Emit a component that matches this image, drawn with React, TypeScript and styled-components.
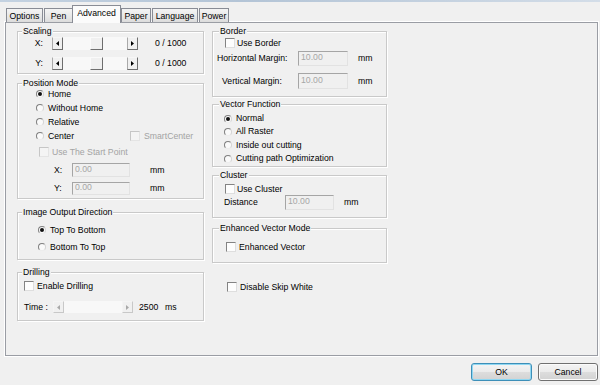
import React from "react";
import styled, { createGlobalStyle, css } from "styled-components";

const Global = createGlobalStyle`
  html, body { margin: 0; padding: 0; background: #f0f0f0; }
  body { font-family: "Liberation Sans", Arial, sans-serif; font-size: 8.7px; color: #000; }
  * { box-sizing: border-box; }
`;

const Window = styled.div`
  width: 600px;
  height: 385px;
  background: #f0f0f0;
  display: flex;
  flex-direction: column;
  overflow: hidden;
`;

const TopStrip = styled.div`
  height: 2px;
  background: linear-gradient(90deg, #c4d2e1, #b3c4d6 40%, #d3dde8);
`;

const TabStrip = styled.div`
  height: 20px;
  display: flex;
  align-items: flex-end;
  padding-left: 6px;
  position: relative;
  z-index: 2;
`;

const Tab = styled.div<{ $w: number; $active?: boolean }>`
  width: ${(p) => p.$w}px;
  height: 14px;
  margin-right: 1px;
  border: 1px solid #898c95;
  border-bottom: none;
  background: linear-gradient(#f4f4f4, #e9e9e9 50%, #dcdcdc);
  display: flex;
  align-items: center;
  justify-content: center;
  padding-top: 1px;
  line-height: 11px;
  white-space: nowrap;
  ${(p) =>
    p.$active &&
    css`
      height: 18px;
      margin: 0 0 -1px -2px;
      background: #fbfbfb;
      padding: 0 0 3px 0;
    `}
`;

const Panel = styled.div`
  margin-left: 5px;
  width: 593px;
  height: 334px;
  border: 1px solid #9a9da4;
  box-shadow: 0 0 0 1px #ffffff;
  background: #f0f0f0;
  display: flex;
  gap: 8px;
  padding: 8px 0 0 11px;
  position: relative;
  z-index: 1;
`;

const Column = styled.div<{ $w: number }>`
  width: ${(p) => p.$w}px;
  display: flex;
  flex-direction: column;
`;

const Group = styled.div<{ $h: number; $mt?: number }>`
  position: relative;
  height: ${(p) => p.$h}px;
  margin-top: ${(p) => p.$mt ?? 0}px;
  border: 1px solid #c9c9c9;
  box-shadow: inset 1px 1px 0 #ffffff, 1px 1px 0 #ffffff;
  display: flex;
  flex-direction: column;
`;

const Legend = styled.span<{ $x: number }>`
  position: absolute;
  top: -6px;
  left: ${(p) => p.$x}px;
  padding: 0 1px;
  background: #f0f0f0;
  line-height: 11px;
  white-space: nowrap;
`;

const Row = styled.div<{ $h?: number; $mt?: number; $pl?: number }>`
  display: flex;
  align-items: center;
  height: ${(p) => p.$h ?? 14}px;
  margin-top: ${(p) => p.$mt ?? 0}px;
  padding-left: ${(p) => p.$pl ?? 0}px;
  white-space: nowrap;
  line-height: 11px;
`;

const Cell = styled.span<{ $w?: number; $ml?: number; $right?: boolean; $dis?: boolean }>`
  display: inline-block;
  ${(p) => p.$w !== undefined && css`width: ${p.$w}px;`}
  margin-left: ${(p) => p.$ml ?? 0}px;
  text-align: ${(p) => (p.$right ? "right" : "left")};
  color: ${(p) => (p.$dis ? "#a3a3a3" : "#000")};
  flex-shrink: 0;
`;

const Radio = styled.span<{ $on?: boolean }>`
  position: relative;
  width: 8px;
  height: 8px;
  border-radius: 50%;
  border: 1px solid;
  border-color: #7f7f7f #d4d4d4 #ececec #7f7f7f;
  background: #fafafa;
  flex-shrink: 0;
  ${(p) =>
    p.$on &&
    css`
      &::after {
        content: "";
        position: absolute;
        left: 1px;
        top: 1px;
        width: 4px;
        height: 4px;
        border-radius: 50%;
        background: #111;
      }
    `}
`;

const Check = styled.span<{ $dis?: boolean }>`
  width: 10px;
  height: 10px;
  border: 1px solid;
  border-color: ${(p) => (p.$dis ? "#c6c6c6 #e4e4e4 #e4e4e4 #c6c6c6" : "#838383 #dedede #dedede #838383")};
  background: ${(p) => (p.$dis ? "#f4f4f4" : "#fdfdfd")};
  flex-shrink: 0;
`;

const Field = styled.input<{ $w: number; $h: number }>`
  width: ${(p) => p.$w}px;
  height: ${(p) => p.$h}px;
  margin: 0;
  padding: 0 2px 3px;
  border: 1px solid;
  border-color: #a5a5a5 #e2e2e2 #e2e2e2 #a5a5a5;
  background: #f0f0f0;
  font: inherit;
  font-size: 8.7px;
  line-height: 11px;
  color: #a6a6a6;
  -webkit-text-fill-color: #a6a6a6;
  opacity: 1;
  flex-shrink: 0;
`;

const Slider = styled.div<{ $w: number; $h: number }>`
  width: ${(p) => p.$w}px;
  height: ${(p) => p.$h}px;
  display: flex;
  background: #f8f8f8;
  flex-shrink: 0;
`;

const SlideBtn = styled.div<{ $dis?: boolean }>`
  width: 11px;
  height: 100%;
  background: #f0f0f0;
  border: 1px solid;
  border-color: ${(p) => (p.$dis ? "#f4f4f4 #c8c8c8 #c8c8c8 #f4f4f4" : "#f6f6f6 #6e6e6e #6e6e6e #a9a9a9")};
  display: flex;
  align-items: center;
  justify-content: center;
  flex-shrink: 0;
`;

const Thumb = styled.div<{ $at: number }>`
  margin-left: ${(p) => p.$at}px;
  width: 13px;
  height: 100%;
  background: #f0f0f0;
  border: 1px solid;
  border-color: #fafafa #6e6e6e #6e6e6e #fafafa;
  flex-shrink: 0;
`;

const Track = styled.div`
  flex: 1;
`;

const Buttons = styled.div`
  display: flex;
  justify-content: flex-end;
  gap: 6px;
  margin-top: 7px;
  padding-right: 2px;
`;

const Button = styled.button<{ $w: number; $def?: boolean }>`
  width: ${(p) => p.$w}px;
  height: 18px;
  padding: 0;
  border: 1px solid #707070;
  border-radius: 3px;
  background: linear-gradient(#f4f4f4, #ebebeb 48%, #dddddd 52%, #d2d2d2);
  box-shadow: inset 0 0 0 1px #fbfbfb;
  font-family: "Liberation Sans", Arial, sans-serif;
  font-size: 8.7px;
  color: #000;
  ${(p) =>
    p.$def &&
    css`
      border-color: #3d8fb8;
      box-shadow: inset 0 0 0 1px #8fd7f2;
    `}
`;

const Arrow = ({ dir, dis }: { dir: "l" | "r"; dis?: boolean }) => (
  <svg width="3" height="5" viewBox="0 0 3 5">
    <path d={dir === "l" ? "M3 0 L0 2.5 L3 5Z" : "M0 0 L3 2.5 L0 5Z"} fill={dis ? "#a8a8a8" : "#000"} />
  </svg>
);

const RadioRow = ({ label, on, pl, mt, gap = 4, h }: { label: string; on?: boolean; pl: number; mt?: number; gap?: number; h?: number }) => (
  <Row $pl={pl} $mt={mt} $h={h}>
    <Radio $on={on} />
    <Cell $ml={gap}>{label}</Cell>
  </Row>
);

const CheckRow = ({ label, pl, mt, gap = 3, h, dis }: { label: string; pl: number; mt?: number; gap?: number; h?: number; dis?: boolean }) => (
  <Row $pl={pl} $mt={mt} $h={h}>
    <Check $dis={dis} />
    <Cell $ml={gap} $dis={dis}>{label}</Cell>
  </Row>
);

const tabs: [string, number][] = [
  ["Options", 37],
  ["Pen", 29],
  ["Advanced", 49],
  ["Paper", 30],
  ["Language", 46],
  ["Power", 30],
];

export default function App() {
  return (
    <Window>
      <Global />
      <TopStrip />
      <TabStrip>
        {tabs.map(([t, w]) => (
          <Tab key={t} $w={w} $active={t === "Advanced"}>
            {t}
          </Tab>
        ))}
      </TabStrip>
      <Panel>
        <Column $w={187}>
          <Group $h={43}>
            <Legend $x={4}>Scaling</Legend>
            {["X:", "Y:"].map((l, i) => (
              <Row key={l} $mt={i === 0 ? 5 : 7} $h={13}>
                <Cell $w={25} $right>{l}</Cell>
                <Cell $ml={9}>
                  <Slider $w={86} $h={13}>
                    <SlideBtn><Arrow dir="l" /></SlideBtn>
                    <Thumb $at={27} />
                    <Track />
                    <SlideBtn><Arrow dir="r" /></SlideBtn>
                  </Slider>
                </Cell>
                <Cell $ml={17}>0 / 1000</Cell>
              </Row>
            ))}
          </Group>

          <Group $h={116} $mt={9}>
            <Legend $x={4}>Position Mode</Legend>
            <RadioRow label="Home" on pl={18} mt={3} />
            <RadioRow label="Without Home" pl={18} />
            <RadioRow label="Relative" pl={18} />
            <Row $pl={18}>
              <Radio />
              <Cell $ml={4} $w={82}>Center</Cell>
              <Check $dis />
              <Cell $ml={4} $dis>SmartCenter</Cell>
            </Row>
            <CheckRow label="Use The Start Point" pl={21} mt={2} dis />
            {["X:", "Y:"].map((l, i) => (
              <Row key={l} $pl={36} $mt={4}>
                <Cell $w={18}>{l}</Cell>
                <Field $w={58} $h={i === 0 ? 14 : 13} disabled defaultValue="0.00" />
                <Cell $ml={20}>mm</Cell>
              </Row>
            ))}
          </Group>

          <Group $h={48} $mt={13}>
            <Legend $x={4}>Image Output Direction</Legend>
            <RadioRow label="Top To Bottom" on pl={20} mt={10} />
            <RadioRow label="Bottom To Top" pl={20} mt={3} />
          </Group>

          <Group $h={49} $mt={12}>
            <Legend $x={4}>Drilling</Legend>
            <CheckRow label="Enable Drilling" pl={6} mt={6} />
            <Row $pl={6} $mt={7}>
              <Cell $w={29}>Time :</Cell>
              <Slider $w={80} $h={12}>
                <SlideBtn $dis><Arrow dir="l" dis /></SlideBtn>
                <Track />
                <SlideBtn $dis><Arrow dir="r" dis /></SlideBtn>
              </Slider>
              <Cell $ml={6} $w={26}>2500</Cell>
              <Cell>ms</Cell>
            </Row>
          </Group>
        </Column>

        <Column $w={175}>
          <Group $h={66}>
            <Legend $x={6}>Border</Legend>
            <CheckRow label="Use Border" pl={12} mt={4} gap={2} />
            <Row $pl={4} $mt={1} $h={15}>
              <Cell $w={81}>Horizontal Margin:</Cell>
              <Field $w={50} $h={15} disabled defaultValue="10.00" />
              <Cell $ml={10}>mm</Cell>
            </Row>
            <Row $pl={9} $mt={7} $h={16}>
              <Cell $w={76}>Vertical Margin:</Cell>
              <Field $w={50} $h={16} disabled defaultValue="10.00" />
              <Cell $ml={10}>mm</Cell>
            </Row>
          </Group>

          <Group $h={63} $mt={7}>
            <Legend $x={6}>Vector Function</Legend>
            <RadioRow label="Normal" on pl={11} mt={7} h={13} />
            <RadioRow label="All Raster" pl={11} h={13} />
            <RadioRow label="Inside out cutting" pl={11} h={14} />
            <RadioRow label="Cutting path Optimization" pl={11} h={13} />
          </Group>

          <Group $h={43} $mt={8}>
            <Legend $x={6}>Cluster</Legend>
            <CheckRow label="Use Cluster" pl={12} mt={7} h={12} gap={2} />
            <Row $pl={11} $h={15}>
              <Cell $w={61}>Distance</Cell>
              <Field $w={49} $h={15} disabled defaultValue="10.00" />
              <Cell $ml={10}>mm</Cell>
            </Row>
          </Group>

          <Group $h={35} $mt={10}>
            <Legend $x={6}>Enhanced Vector Mode</Legend>
            <CheckRow label="Enhanced Vector" pl={13} mt={11} />
          </Group>

          <CheckRow label="Disable Skip White" pl={15} mt={17} />
        </Column>
      </Panel>
      <Buttons>
        <Button $w={61} $def>OK</Button>
        <Button $w={60}>Cancel</Button>
      </Buttons>
    </Window>
  );
}
